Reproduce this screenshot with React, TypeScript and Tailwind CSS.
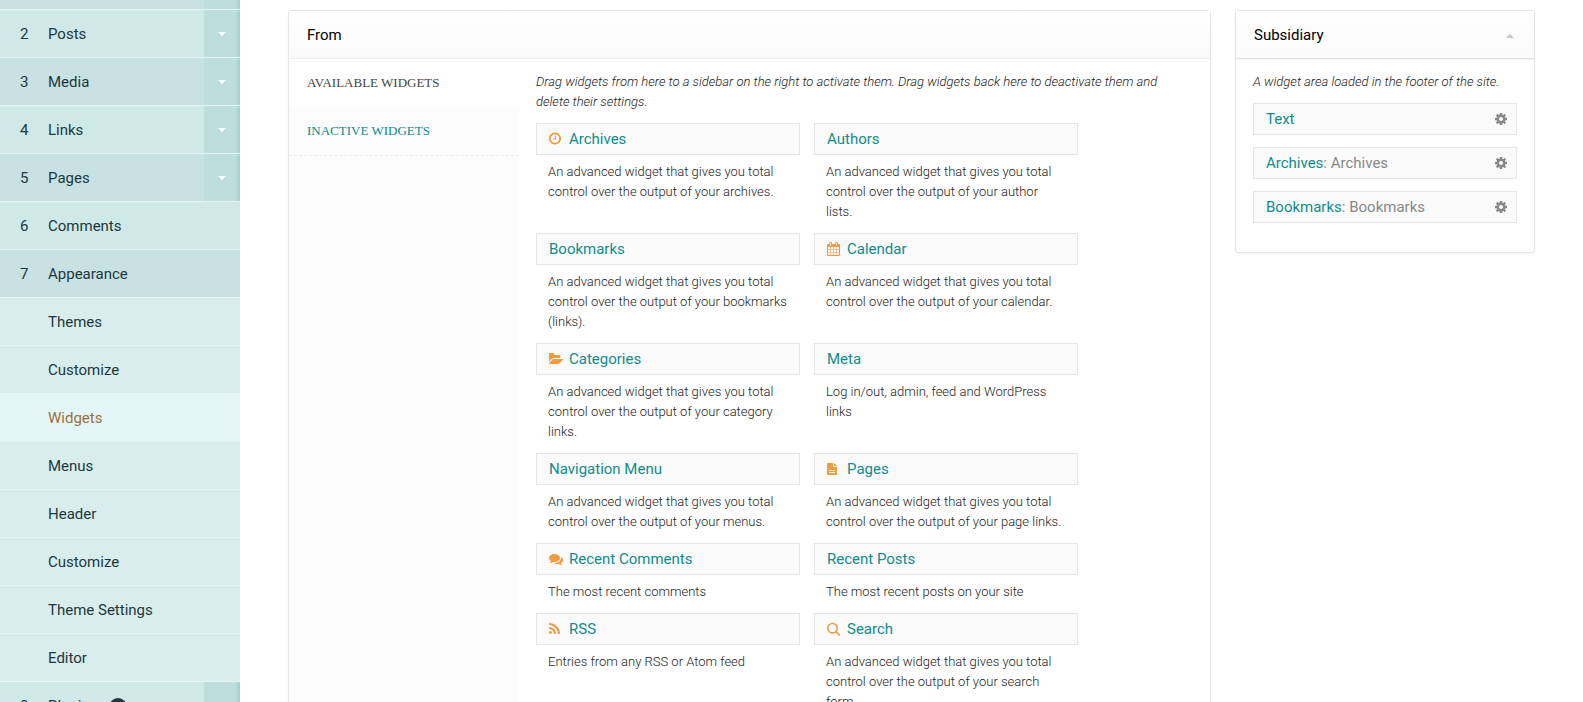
import type { ReactNode } from "react";

function Glyph({ d, box = "0 0 1792 1792" }: { d: string; box?: string }) {
  return (
    <svg aria-hidden="true" viewBox={box} className="h-[14px] w-[14px] shrink-0" fill="currentColor">
      <path d={d} />
    </svg>
  );
}

const clock = (
  <Glyph
    box="128 64 1792 1792"
    d="M1024 544v448q0 14-9 23t-23 9h-320q-14 0-23-9t-9-23v-64q0-14 9-23t23-9h224v-352q0-14 9-23t23-9h64q14 0 23 9t9 23zm416 352q0-148-73-273t-198-198-273-73-273 73-198 198-73 273 73 273 198 198 273 73 273-73 198-198 73-273zm224 0q0 209-103 385.5t-279.5 279.5-385.5 103-385.5-103-279.5-279.5-103-385.5 103-385.5 279.5-279.5 385.5-103 385.5 103 279.5 279.5 103 385.5z"
  />
);

const calendar = (
  <svg aria-hidden="true" viewBox="0 0 14 14" className="h-[14px] w-[14px] shrink-0" fill="currentColor">
    <path
      fillRule="evenodd"
      d="M1 2h1V1.2Q2 0 3.2 0h.6Q5 0 5 1.2V2h3V1.2Q8 0 9.2 0h.6Q11 0 11 1.2V2h1q1 0 1 1v10q0 1-1 1H1q-1 0-1-1V3q0-1 1-1zm2-1v2.4h1V1zm6 0v2.4h1V1zM1 5v2.2h2.2V5zm2.7 0v2.2h2.6V5zm3.1 0v2.2h2.5V5zm3 0v2.2H12V5zM1 7.7v2.5h2.2V7.7zm2.7 0v2.5h2.6V7.7zm3.1 0v2.5h2.5V7.7zm3 0v2.5H12V7.7zM1 10.7V13h2.2v-2.3zm2.7 0V13h2.6v-2.3zm3.1 0V13h2.5v-2.3zm3 0V13H12v-2.3z"
    />
  </svg>
);

const folder = (
  <Glyph
    box="0 0 1830 1792"
    d="M1815 952q0 31-31 66l-336 396q-43 51-120.5 86.5t-143.5 35.5h-1088q-34 0-60.5-13t-26.5-43q0-31 31-66l336-396q43-51 120.5-86.5t143.5-35.5h1088q34 0 60.5 13t26.5 43zm-343-344v160h-832q-94 0-197 47.5t-164 119.5l-337 396-5 6q0-4-.5-12.5t-.5-12.5v-960q0-92 66-158t158-66h320q92 0 158 66t66 158v32h544q92 0 158 66t66 158z"
  />
);

const file = (
  <Glyph
    box="0 0 14 14"
    d="M.8 1H6v3.500Q6 5 6.500 5H10v7.200q0 .8-.8.8H.8Q0 13 0 12.200V1.800Q0 1 .8 1zM7 1l3 3H7zM2 8v1h6V8zm0 2v1h6v-1z"
  />
);

const comments = (
  <Glyph d="M1408 768q0 139-94 257t-256.500 186.500-353.500 68.500q-86 0-176-16-124 88-278 128-36 9-86 16h-3q-11 0-20.500-8t-11.500-21q-1-3-1-6.500t.5-6.500 2-6l2.500-5 3.500-5.500 4-5 4.500-5 4-4.500q5-6 23-25t26-29.500 22.500-29 25-38.500 20.500-44q-124-72-195-177t-71-224q0-139 94-257t256.500-186.500 353.500-68.500 353.500 68.500 256.500 186.500 94 257zm384 256q0 120-71 224.500t-195 176.500q10 24 20.500 44t25 38.500 22.500 29 26 29.500 23 25q1 1 4 4.500t4.500 5 4 5 3.500 5.500l2.500 5 2 6 .5 6.500-1 6.500q-3 14-13 22t-22 7q-50-7-86-16-154-40-278-128-90 16-176 16-271 0-472-132 58 4 88 4 161 0 309-45t264-129q125-92 192-212t67-254q0-77-23-152 129 71 204 178t75 230z" />
);

const rss = (
  <Glyph
    box="192 0 1792 1792"
    d="M576 1344q0 80-56 136t-136 56-136-56-56-136 56-136 136-56 136 56 56 136zm512 123q2 28-17 48-18 21-47 21h-135q-25 0-43-16.500t-20-41.500q-22-229-184.500-391.500t-391.500-184.500q-25-2-41.500-20t-16.500-43v-135q0-29 21-47 17-17 43-17h5q160 13 306 80.500t259 181.500q114 113 181.500 259t80.500 306zm512 2q2 27-18 47-18 20-46 20h-143q-26 0-44.500-17.500t-19.500-42.500q-12-215-101-408.500t-231.500-336-336-231.500-408.500-102q-25-1-42.500-19.500t-17.500-43.500v-143q0-28 20-46 18-18 44-18h3q262 13 501.500 120t425.500 294q187 186 294 425.500t120 501.500z"
  />
);

const search = (
  <svg aria-hidden="true" viewBox="0 0 14 14" className="h-[14px] w-[14px] shrink-0" fill="none" stroke="currentColor">
    <circle cx="5.500" cy="6.200" r="4.700" strokeWidth="1.600" />
    <path d="M8.900 9.600l3.300 3.300" strokeWidth="1.600" strokeLinecap="round" />
  </svg>
);

function Gear() {
  return (
    <svg aria-hidden="true" viewBox="0 0 12 12" className="h-3 w-3" fill="none" stroke="currentColor">
      <circle cx="6" cy="6" r="3.250" strokeWidth="2.500" />
      <path
        d="M6 0v2.500M6 9.500V12M0 6h2.500M9.500 6H12M1.700 1.700l1.800 1.800M8.500 8.500l1.800 1.800M10.300 1.700L8.500 3.500M3.500 8.500l-1.800 1.800"
        strokeWidth="2.400"
      />
    </svg>
  );
}

type Item = { n: number; label: string; toggle?: boolean; shade?: boolean; badge?: string };

const topItems: Item[] = [
  { n: 2, label: "Posts", toggle: true },
  { n: 3, label: "Media", toggle: true, shade: true },
  { n: 4, label: "Links", toggle: true },
  { n: 5, label: "Pages", toggle: true, shade: true },
  { n: 6, label: "Comments" },
  { n: 7, label: "Appearance", shade: true },
];

const subItems = ["Themes", "Customize", "Widgets", "Menus", "Header", "Customize", "Theme Settings", "Editor"];

function ToggleStrip({ children }: { children?: ReactNode }) {
  return (
    <span className="flex w-9 items-center justify-center bg-[linear-gradient(to_left,#a6d2d1_0,#a9d4d3_2px,#bddedd_4px)]">
      {children}
    </span>
  );
}

function MenuRow({ item }: { item: Item }) {
  return (
    <li className={item.shade ? "flex h-12 border-b border-[#e6f6f6] bg-[#c8e2e3]" : "flex h-12 border-b border-[#e6f6f6] bg-[#cfe9e9]"}>
      <a href="#" className="flex flex-1 items-center pt-[2px] pl-5">
        <span className="w-7">{item.n}</span>
        {item.label}
        {item.badge && (
          <span className="ml-3 flex h-[18px] w-[18px] items-center justify-center rounded-full bg-[#20373f] text-[10px] text-white">
            {item.badge}
          </span>
        )}
      </a>
      {item.toggle && (
        <button type="button" aria-label={`Expand ${item.label}`} className="flex">
          <ToggleStrip>
            <svg aria-hidden="true" viewBox="0 0 8 4" className="h-1 w-2 fill-white">
              <path d="M0 0h8L4 4z" />
            </svg>
          </ToggleStrip>
        </button>
      )}
    </li>
  );
}

type Widget = { title: string; text: string; icon?: ReactNode };

const widgets: Widget[] = [
  { title: "Archives", icon: clock, text: "An advanced widget that gives you total control over the output of your archives." },
  { title: "Authors", text: "An advanced widget that gives you total control over the output of your author lists." },
  { title: "Bookmarks", text: "An advanced widget that gives you total control over the output of your bookmarks (links)." },
  { title: "Calendar", icon: calendar, text: "An advanced widget that gives you total control over the output of your calendar." },
  { title: "Categories", icon: folder, text: "An advanced widget that gives you total control over the output of your category links." },
  { title: "Meta", text: "Log in/out, admin, feed and WordPress links" },
  { title: "Navigation Menu", text: "An advanced widget that gives you total control over the output of your menus." },
  { title: "Pages", icon: file, text: "An advanced widget that gives you total control over the output of your page links." },
  { title: "Recent Comments", icon: comments, text: "The most recent comments" },
  { title: "Recent Posts", text: "The most recent posts on your site" },
  { title: "RSS", icon: rss, text: "Entries from any RSS or Atom feed" },
  { title: "Search", icon: search, text: "An advanced widget that gives you total control over the output of your search form." },
];

const placed = [{ title: "Text" }, { title: "Archives", name: "Archives" }, { title: "Bookmarks", name: "Bookmarks" }];

export default function App() {
  return (
    <div className="flex h-screen overflow-hidden bg-white font-['Roboto',sans-serif] text-[15px]">
      <nav aria-label="Admin menu" className="w-60 shrink-0 text-[#20373f]">
        <ul>
          <li className="flex h-[10px] justify-end border-b border-[#e6f6f6] bg-[#c8e2e3]">
            <ToggleStrip />
          </li>
          {topItems.map((item) => (
            <MenuRow key={item.n} item={item} />
          ))}
          {subItems.map((label, i) => (
            <li
              key={i}
              className={
                label === "Widgets"
                  ? "h-12 border-b border-[#e6f6f6] bg-[#e4f5f6] text-[#9a6f45]"
                  : "h-12 border-b border-[#e6f6f6] bg-[#d9edec]"
              }
            >
              <a href="#" className="flex h-full items-center pt-[2px] pl-12">
                {label}
              </a>
            </li>
          ))}
          <MenuRow item={{ n: 8, label: "Plugins", toggle: true, badge: "1" }} />
        </ul>
      </nav>

      <main className="flex min-w-0 flex-1 items-start gap-6 px-12 pt-[10px]">
        <section className="min-w-0 flex-1 rounded-[3px] border border-[#e6e6e6] shadow-[0_1px_2px_#0000000d]">
          <h2 className="flex h-12 items-center border-b border-[#eeeeee] bg-linear-to-b from-white to-[#fafafa] px-[18px] pt-[2px] text-black">
            From
          </h2>
          <div className="flex">
            <div className="w-[230px] shrink-0 bg-[#fcfcfc] font-['Liberation_Serif',serif] text-[13px]">
              <button type="button" className="flex h-12 w-full items-center bg-white px-[18px] text-[#444] uppercase">
                Available Widgets
              </button>
              <button
                type="button"
                className="flex h-[49px] w-full items-center border-b border-dashed border-[#eaeaea] px-[18px] text-[#0e8b8b] uppercase"
              >
                Inactive Widgets
              </button>
            </div>
            <div className="min-w-0 flex-1 px-[17px] pt-[13px]">
              <p className="mb-[11px] text-[13px] leading-5 font-light text-[#222] italic">
                Drag widgets from here to a sidebar on the right to activate them. Drag widgets back here to deactivate them and
                delete their settings.
              </p>
              <div className="grid grid-cols-[264px_264px] gap-x-[14px]">
                {widgets.map((w) => (
                  <article key={w.title}>
                    <h3 className="flex h-8 items-center border border-[#e5e5e5] bg-[#fafafa] px-3 text-[#118c8c]">
                      {w.icon && <span className="w-5 text-[#f29a3f]">{w.icon}</span>}
                      {w.title}
                    </h3>
                    <p className="px-3 pt-[7px] pb-[11px] text-[13px] leading-5 font-light text-[#222]">{w.text}</p>
                  </article>
                ))}
              </div>
            </div>
          </div>
        </section>

        <section className="w-[300px] shrink-0 rounded-[3px] border border-[#e6e6e6] shadow-[0_1px_2px_#0000000d]">
          <h2 className="flex h-12 items-center justify-between border-b border-[#e2e2e2] bg-linear-to-b from-white to-[#fafafa] pt-[2px] pr-5 pl-[18px] text-black shadow-[0_1px_2px_#0000000d]">
            Subsidiary
            <button type="button" aria-label="Collapse Subsidiary">
              <svg aria-hidden="true" viewBox="0 0 8 4" className="h-1 w-2 fill-[#c8c8c8]">
                <path d="M0 4h8L4 0z" />
              </svg>
            </button>
          </h2>
          <div className="px-[17px] pt-[13px] pb-[29px]">
            <p className="mb-[11px] text-[13px] leading-5 font-light text-[#222] italic">
              A widget area loaded in the footer of the site.
            </p>
            <ul className="flex flex-col gap-3">
              {placed.map((p) => (
                <li
                  key={p.title}
                  className="flex h-8 items-center justify-between border border-[#e5e5e5] bg-[#fafafa] pr-[9px] pl-3 text-[#118c8c]"
                >
                  <span>
                    {p.title}
                    {p.name && <span className="text-[#888]">: {p.name}</span>}
                  </span>
                  <button type="button" aria-label={`${p.title} settings`} className="text-[#888]">
                    <Gear />
                  </button>
                </li>
              ))}
            </ul>
          </div>
        </section>
      </main>
    </div>
  );
}
